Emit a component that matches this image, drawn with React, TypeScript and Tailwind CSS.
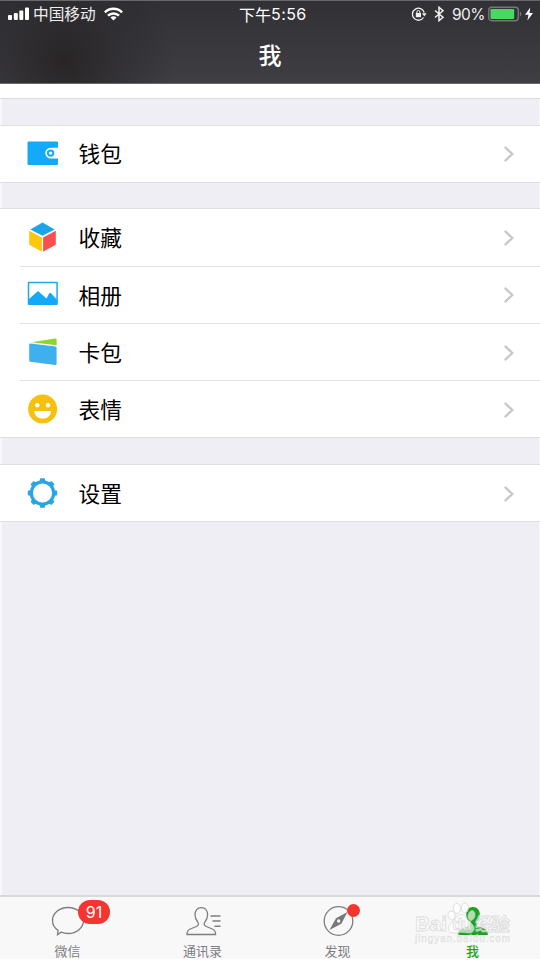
import type { ReactNode } from "react";

type Item = {
    label: string;
    icon: ReactNode;
}

const WalletIcon = ()=>(
    <svg className="w-8 h-8" viewBox="0 0 32 32">
        <path d="M2.500 4.500h28.500a1 1 0 0 1 1 1v5.200h-7.300a5.400 5.400 0 0 0 0 10.800H32v5.500a1 1 0 0 1-1 1H2.500a1 1 0 0 1-1-1v-21.500a1 1 0 0 1 1-1z" fill="#14aaf8"/>
        <circle cx="24.600" cy="16.100" r="2.700" fill="white" stroke="#14aaf8" strokeWidth="2"/>
    </svg>
)

const CubeIcon = ()=>(
    <svg className="w-8 h-8" viewBox="0 0 32 32">
        <path d="M16.500 1.500l12.200 7-12.200 6.300-12.200-6.300z" fill="#1ba5e8"/>
        <path d="M3.200 9.800l12.700 6.700v14.300L3.800 24q-.6-.4-.6-1.200z" fill="#fcc70c"/>
        <path d="M29.800 9.800l-12.700 6.700v14.300L29.200 24q.6-.4.6-1.200z" fill="#f9504f"/>
    </svg>
)

const AlbumIcon = ()=>(
    <svg className="w-8 h-8" viewBox="0 0 32 32">
        <rect x="2.500" y="4.500" width="28.600" height="21.800" rx="0.600" fill="white" stroke="#20a6ec" strokeWidth="1.500"/>
        <path d="M2.500 21.500l9.500-8.500 8.500 7.400 2.700-5 1.300-.6 6.500 7v4.500H2.500z" fill="#12a9f7"/>
    </svg>
)

const CardsIcon = ()=>(
    <svg className="w-8 h-8" viewBox="0 0 32 32">
        <path d="M5.500 6.300L29.300 2.400q1.300-.1 1.300 1v5.800z" fill="#8bd62b"/>
        <path d="M4.200 7.600l25.400 2.800q1 .2 1 1.100v16.200q0 1.300-1.200 1.200L4.200 25.700q-1-.1-1-1.200V8.600q0-1.100 1-1z" fill="#3eb0ee"/>
    </svg>
)

const SmileIcon = ()=>(
    <svg className="w-8 h-8" viewBox="0 0 32 32">
        <circle cx="16.600" cy="16" r="14.500" fill="#f6c00c"/>
        <circle cx="11.300" cy="12.300" r="2.200" fill="white"/>
        <circle cx="22" cy="12.300" r="2.200" fill="white"/>
        <path d="M8.300 18h16.800c-.2 4.500-3.500 7.600-8.400 7.600S8.500 22.500 8.300 18z" fill="white"/>
    </svg>
)

const teeth = [0, 45, 90, 135, 180, 225, 270, 315];

const GearIcon = ()=>(
    <svg className="w-8 h-8" viewBox="0 0 32 32">
        <circle cx="16.500" cy="16" r="11.200" fill="none" stroke="#27a5e7" strokeWidth="3.200"/>
        {
            teeth.map((angle)=>(
                <path key={angle} d="M14.300 1.300h4.400l.8 3.700h-6z" fill="#27a5e7" transform={`rotate(${angle} 16.500 16)`}/>
            ))
        }
    </svg>
)

const groups: Item[][] = [
    [{ label: "钱包", icon: <WalletIcon/> }],
    [
        { label: "收藏", icon: <CubeIcon/> },
        { label: "相册", icon: <AlbumIcon/> },
        { label: "卡包", icon: <CardsIcon/> },
        { label: "表情", icon: <SmileIcon/> },
    ],
    [{ label: "设置", icon: <GearIcon/> }],
];

const StatusBar = ()=>(
    <div className="flex h-[26px] items-center leading-[26px] text-[#eeeeef]">
        <div className="flex w-[239px] items-center pl-2">
            <svg className="w-[22px] h-[14px]" viewBox="0 0 22 14" fill="white">
                <rect x="0" y="8" width="4" height="5" rx="1"/>
                <rect x="5.800" y="6" width="4" height="7" rx="1"/>
                <rect x="11.300" y="3.400" width="4" height="9.600" rx="1"/>
                <rect x="17" y="0.500" width="4" height="12.500" rx="1"/>
            </svg>
            <span className="ml-[3px] w-[71px] whitespace-nowrap text-[15.700px]">中国移动</span>
            <svg className="w-[19px] h-[14px]" viewBox="0 0 19 14" fill="none" stroke="white" strokeWidth="2.500">
                <path d="M.9 5.400a12.200 12.200 0 0 1 17.200 0"/>
                <path d="M4 8.700a7.800 7.800 0 0 1 11 0"/>
                <path d="M9.500 13.500l-3-3a4.200 4.200 0 0 1 6 0z" fill="white" stroke="none"/>
            </svg>
        </div>
        <div className="flex w-[172px] whitespace-nowrap text-white">
            <span className="text-[16px]">下午</span>
            <span className="font-[Inter] text-[16px] tracking-[0.400px]">5:56</span>
        </div>
        <svg className="w-4 h-[14px]" viewBox="0 0 16 14" fill="none" stroke="#f3f3f3" strokeWidth="1.300">
            <path d="M12.500 10.500A6 6 0 1 1 13.200 5.500"/>
            <path d="M11 6.200h4.600l-2.300 3.200z" fill="#f3f3f3" stroke="none"/>
            <rect x="4.800" y="6" width="5.200" height="4.200" fill="#f3f3f3" stroke="none"/>
            <path d="M5.900 6.200V5a1.500 1.500 0 0 1 3 0v1.200" strokeWidth="1"/>
        </svg>
        <svg className="ml-[6px] w-3 h-4" viewBox="0 0 12 16" fill="none" stroke="#f3f3f3" strokeWidth="1.500">
            <path d="M2 4.500l8 6.800L6 14.700V1.300l4 3.400-8 6.800"/>
        </svg>
        <span className="ml-[7px] mt-px w-[36px] font-[Inter] text-[15.500px] tracking-[-0.600px]">90%</span>
        <svg className="w-[34px] h-4" viewBox="0 0 34 16">
            <rect x="0.800" y="1.300" width="29.500" height="13.400" rx="3" fill="none" stroke="#77777b" strokeWidth="1.400"/>
            <rect x="2.500" y="3" width="23.700" height="10" rx="1.200" fill="#4cd763"/>
            <path d="M31.800 5.300a3 3 0 0 1 0 5.200z" fill="#77777b"/>
        </svg>
        <svg className="ml-[3px] w-2 h-[14px]" viewBox="0 0 8 14" fill="white">
            <path d="M5.300.5L0 7.800h3.500L2.400 13.500 8 5.900H4.500z"/>
        </svg>
    </div>
)

const Row = ({item, last}: {item: Item, last: boolean})=>(
    <div className="flex h-[57.250px] items-center pl-[26px] pr-[25px] relative">
        <div className="-mt-[2px]">{item.icon}</div>
        <span className="-mt-[1.500px] ml-[20.500px] flex-grow text-[21.700px] leading-8 text-black">{item.label}</span>
        <svg className="w-3 h-[18px]" viewBox="0 0 12 18" fill="none" stroke="#c7c7cc" strokeWidth="2.300">
            <path d="M1.800 1.800L9.300 9l-7.500 7.200"/>
        </svg>
        {!last && <div className="absolute bottom-0 left-5 right-0 h-px bg-[#e2e2e4]"></div>}
        {last && <div className="absolute bottom-0 left-0 right-0 h-px bg-[#dfdfe3]"></div>}
    </div>
)

const Watermark = ()=>(
    <div className="absolute left-[414px] top-[4px] h-[48px] w-[100px]">
        <svg className="h-[48px] w-[100px]" viewBox="0 0 100 48" fill="#ffffff" fillOpacity="0.650" stroke="#c8c8c8" strokeOpacity="0.600" strokeWidth="0.900">
            <ellipse cx="37.500" cy="14.500" rx="3.400" ry="4.500" transform="rotate(-15 37.500 14.500)"/>
            <ellipse cx="42.800" cy="7.500" rx="3.600" ry="5"/>
            <ellipse cx="51" cy="7" rx="3.500" ry="5"/>
            <ellipse cx="57.500" cy="14.500" rx="3.500" ry="5" transform="rotate(15 57.500 14.500)"/>
            <path d="M47 13.500c4 0 5.500 4 8.500 7s6.500 5.500 4 9.500c-2.500 3.500-7 1.500-12.500 1.500s-10 2-12-1.800c-2-4 1-6.500 4-9.200s4-7 8-7z"/>
            <g fontFamily="Liberation Sans" fontWeight="bold">
                <text x="1" y="30" fontSize="21" textLength="32">Bai</text>
                <text x="38.500" y="28.500" fontSize="16" textLength="19">du</text>
                <text x="61" y="30" fontSize="18" fontFamily="Noto Sans CJK SC" textLength="35">经验</text>
                <text x="1" y="41" fontSize="10" strokeWidth="0.500" fontWeight="normal" textLength="95">jingyan.baidu.com</text>
            </g>
        </svg>
    </div>
)

const TabBar = ()=>(
    <div className="relative grid h-[65px] grid-cols-4 border-t-2 border-b border-t-[#d9d9dc] border-b-white bg-[#f8f8f9] text-[13px] leading-[13px] text-[#7d7d82]">
        <div className="relative flex flex-col items-center pt-[8px]">
            <svg className="w-[34px] h-[32px]" viewBox="0 0 34 32" fill="none" stroke="#7d7e80" strokeWidth="1.300">
                <path d="M17 2.500c8.700 0 15.500 5.700 15.500 13s-6.800 13-15.500 13c-2.600 0-4.700-.5-6.800-1.400L6.500 29.700l.6-4.300C3.500 23 1.500 19.500 1.500 15.500c0-7.300 6.800-13 15.500-13z"/>
            </svg>
            <span className="mt-[7px]">微信</span>
            <span className="absolute left-[78px] top-[3px] h-6 w-8 rounded-full bg-[#f43530] text-center font-[Inter] text-[16px] leading-6 text-white">91</span>
        </div>
        <div className="flex flex-col items-center pt-[8px]">
            <svg className="w-[36px] h-[32px]" viewBox="0 0 36 32" fill="none" stroke="#7d7e80" strokeWidth="1.300">
                <path d="M16.300 2.600c-4 0-6.300 3-6.300 7.200 0 3.500 1.300 5.400 2.700 7.200 1.200 1.800 1 3.500-1.400 4.500l-6 2.500C2.800 25 2 26.500 2 29.500h28.600c0-3-.8-4.500-3.300-5.500l-6-2.500c-2.400-1-2.600-2.700-1.400-4.500 1.400-1.800 2.700-3.700 2.700-7.200 0-4.200-2.300-7.200-6.300-7.200z"/>
                <path d="M25.500 11h10M27.500 16h8M29.500 21.300h6" strokeWidth="1.500"/>
            </svg>
            <span className="mt-[7px]">通讯录</span>
        </div>
        <div className="relative flex flex-col items-center pt-[8px]">
            <svg className="w-[32px] h-[32px]" viewBox="0 0 32 32">
                <circle cx="16.500" cy="16" r="14.300" fill="none" stroke="#7d7e80" strokeWidth="1.300"/>
                <path d="M25.500 7L19.300 18.800l-11.800 6.200L14 13.200zM16.600 14.300a1.700 1.700 0 1 0 .1 3.400 1.700 1.700 0 0 0-.1-3.400z" fill="#77787a" fillRule="evenodd"/>
            </svg>
            <span className="mt-[7px]">发现</span>
            <span className="absolute left-[77px] top-[7px] h-[13px] w-[13px] rounded-full bg-[#f43530]"></span>
        </div>
        <div className="flex flex-col items-center pt-[8px] text-[#1aa31e]">
            <svg className="w-[32px] h-[32px]" viewBox="0 0 32 32" fill="#1aa31e">
                <path d="M16 2c-4.300 0-6.800 3.200-6.800 7.600 0 3.500 1.400 5.700 2.800 7.600 1.200 1.700.8 3.200-1.600 4.200l-6 2.400C2 24.800 1.200 27 1.200 30h29.600c0-3-.8-5.200-3.200-6.200l-6-2.400c-2.400-1-2.800-2.500-1.600-4.200 1.400-1.900 2.800-4.100 2.800-7.600C22.800 5.200 20.300 2 16 2z"/>
            </svg>
            <span className="mt-[7px] font-medium">我</span>
        </div>
        <Watermark/>
    </div>
)

const App = ()=>{
    return(
        <div className="flex h-[960px] w-[540px] flex-col overflow-hidden bg-white font-['Noto_Sans_CJK_SC',sans-serif]">
            <div className="h-[84px] border-y border-[#69696c] bg-linear-to-b from-[#303035] to-[#3f3e43]">
                <div className="h-full bg-[radial-gradient(110px_110px_at_65px_60px,#292527_0%,#29272980_50%,transparent_100%)]">
                    <StatusBar/>
                    <h1 className="text-center text-[23px] leading-[54px] font-medium text-white">我</h1>
                </div>
            </div>
            <div className="h-[15px] border-b border-[#dddde1] bg-white"></div>
            <div className="flex flex-grow flex-col border-l-2 border-r border-[#f8f8fa] bg-[#efeef5]">
                {
                    groups.map((items)=>(
                        <div key={items[0].label} className="-ml-[2px] -mr-px mt-[25.600px] border-t border-[#dfdfe3] bg-white">
                            {items.map((item, index)=>(
                                <Row key={item.label} item={item} last={index === items.length - 1}/>
                            ))}
                        </div>
                    ))
                }
            </div>
            <TabBar/>
        </div>
    )
}

export default App;
